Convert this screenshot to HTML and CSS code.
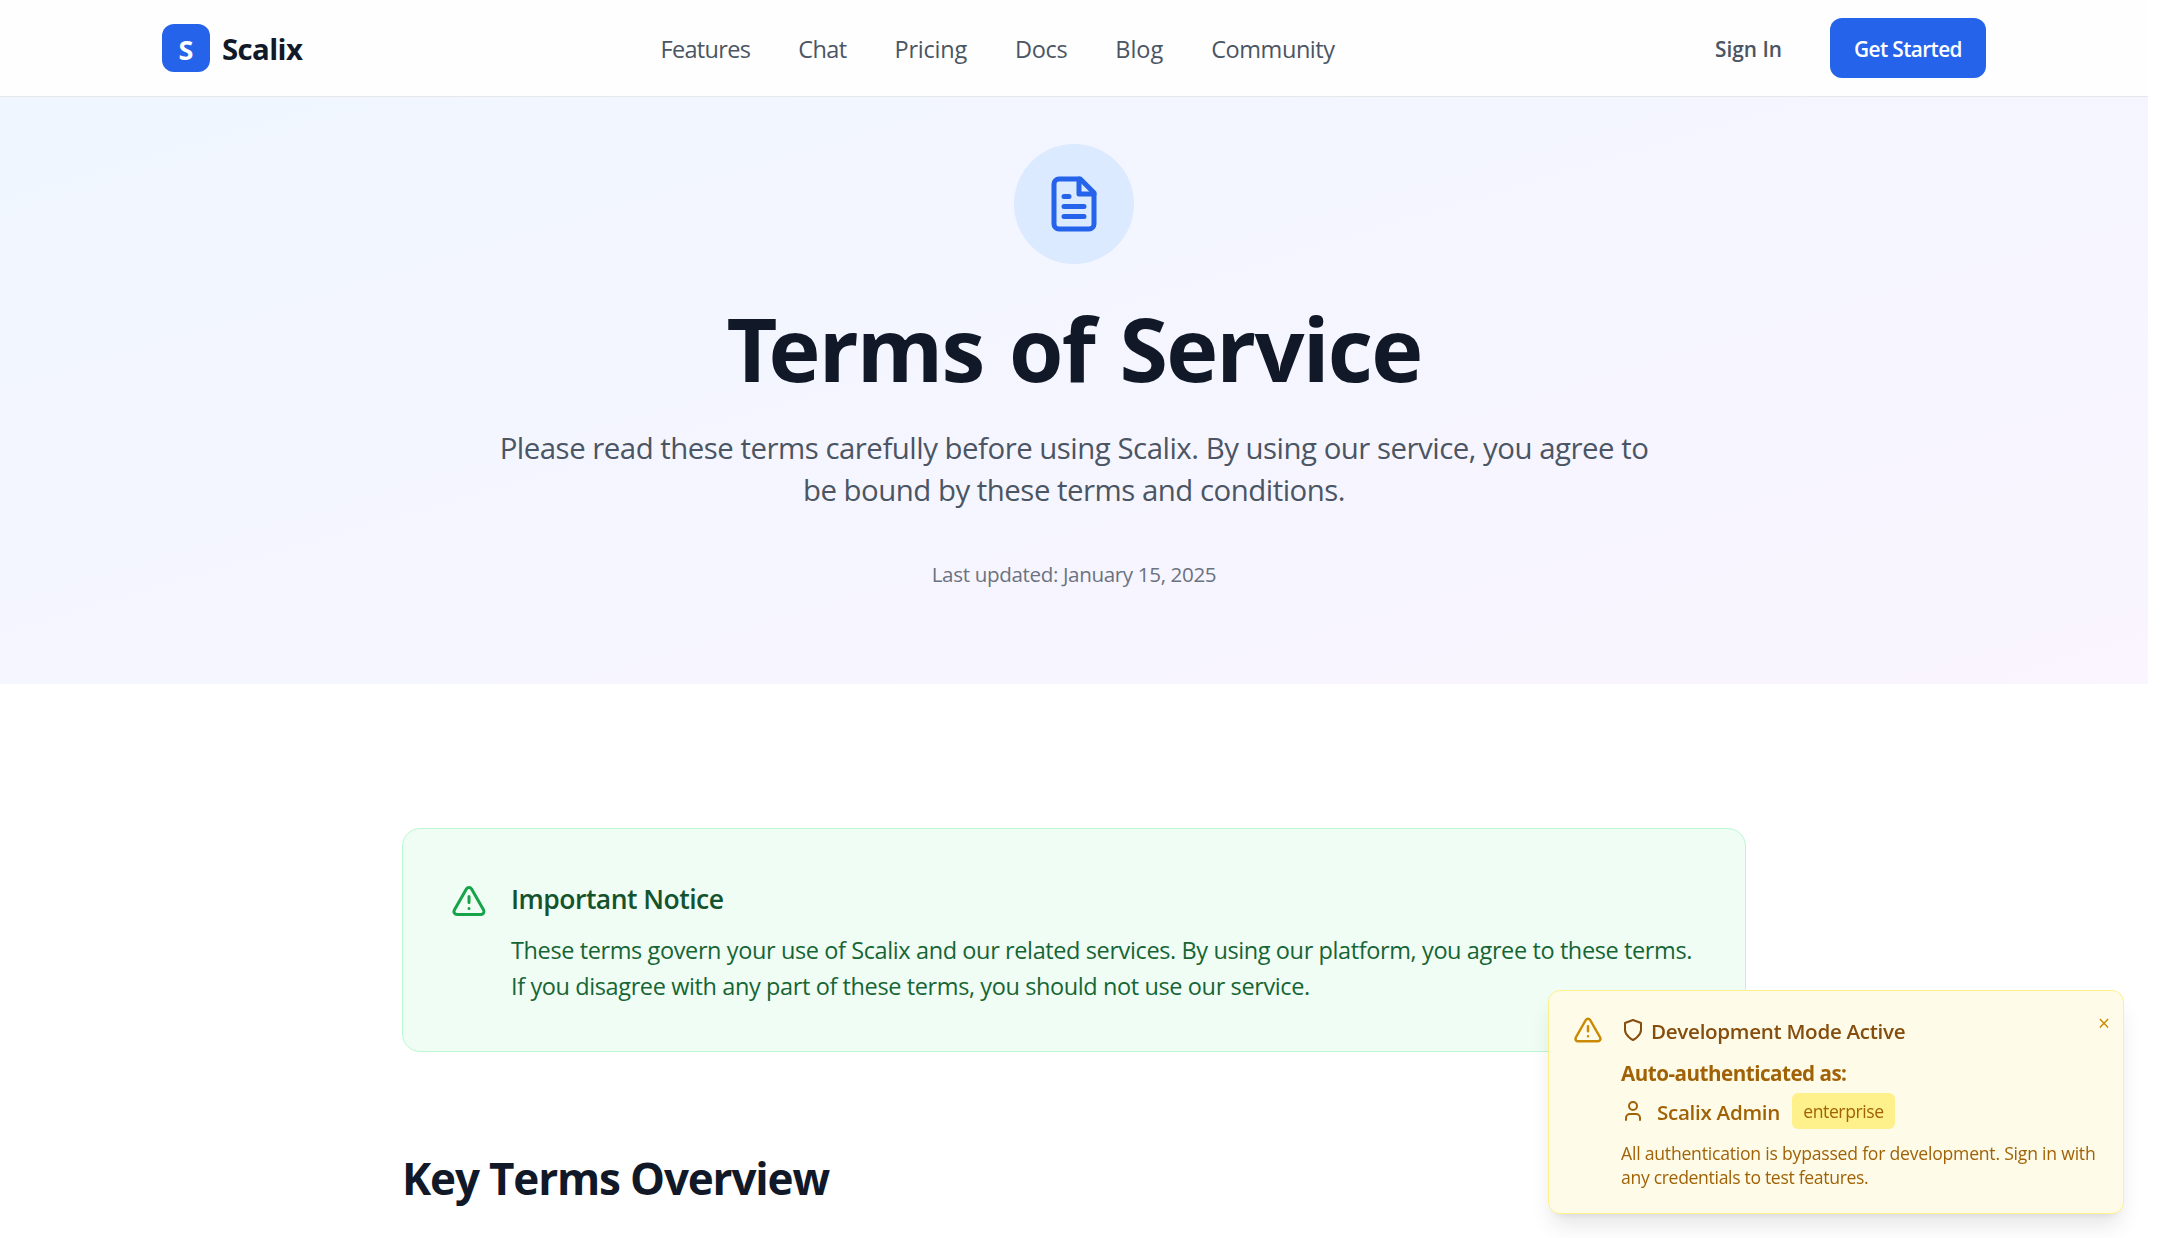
FILE: index.html
```html
<!DOCTYPE html>
<html lang="en">
<head>
<meta charset="utf-8">
<title>Terms of Service - Scalix</title>
<link rel="stylesheet" href="styles.css">
</head>
<body>
<div class="page">
  <header class="header">
    <div class="header-inner">
      <a class="brand"><span class="brand-mark">S</span><span class="brand-name">Scalix</span></a>
      <nav class="nav"><a class="nav-features">Features</a><a class="nav-chat">Chat</a><a class="nav-pricing">Pricing</a><a class="nav-docs">Docs</a><a class="nav-blog">Blog</a><a class="nav-community">Community</a></nav>
      <div class="actions"><a class="sign-in">Sign In</a><a class="button">Get Started</a></div>
    </div>
  </header>
  <section class="hero">
    <div class="hero-icon">
      <svg viewBox="0 0 24 24" width="60" height="60" class="icon"><path d="M14.500 2H6a2 2 0 0 0-2 2v16a2 2 0 0 0 2 2h12a2 2 0 0 0 2-2V7.500L14.500 2z"/><path d="M14 2v6h6"/><path d="M10 9H8M16 13H8M16 17H8"/></svg>
    </div>
    <h1 class="title"><span class="title-kern">T</span>erms of Service</h1>
    <p class="lead">Please read these terms carefully before using Scalix. By using our service, you agree to<br>be bound by these terms and conditions.</p>
    <p class="updated">Last updated: January 15, 2025</p>
  </section>
  <main class="content">
    <section class="notice">
      <svg viewBox="0 0 24 24" width="36" height="36" class="icon notice-icon"><path d="m21.73 18-8-14a2 2 0 0 0-3.48 0l-8 14A2 2 0 0 0 4 21h16a2 2 0 0 0 1.73-3Z"/><path d="M12 9v4M12 17h.01"/></svg>
      <div class="notice-body">
        <h2 class="notice-title">Important Notice</h2>
        <p class="notice-text">These terms govern your use of Scalix and our related services. By using our platform, you agree to these terms.<br>If you disagree with any part of these terms, you should not use our service.</p>
      </div>
    </section>
    <h2 class="section-title">Key Terms Overview</h2>
  </main>
</div>
<aside class="toast">
  <svg viewBox="0 0 24 24" width="30" height="30" class="icon toast-icon"><path d="m21.73 18-8-14a2 2 0 0 0-3.48 0l-8 14A2 2 0 0 0 4 21h16a2 2 0 0 0 1.73-3Z"/><path d="M12 9v4M12 17h.01"/></svg>
  <div class="toast-body">
    <div class="toast-title"><svg viewBox="0 0 24 24" width="24" height="24" class="icon"><path d="M12 22s8-4 8-10V5l-8-3-8 3v7c0 6 8 10 8 10"/></svg><span>Development Mode Active</span></div>
    <div class="toast-label">Auto-authenticated as:</div>
    <div class="toast-user"><svg viewBox="0 0 24 24" width="24" height="24" class="icon"><path d="M19 21v-2a4 4 0 0 0-4-4H9a4 4 0 0 0-4 4v2"/><circle cx="12" cy="7" r="4"/></svg><span class="user-name">Scalix Admin</span><span class="badge">enterprise</span></div>
    <p class="toast-text">All authentication is bypassed for development. Sign in with<br><span class="toast-text-end">any credentials to test features.</span></p>
  </div>
  <span class="close">×</span>
</aside>
</body>
</html>
```
FILE: styles.css
```css
* { box-sizing: border-box; }
body { margin: 0; background: #fff; color: #111827; font-family: "Open Sans", sans-serif; overflow: hidden; height: 1238px; }
h1, h2, p { margin: 0; }
.page { width: 2148px; }
.icon { display: block; flex: none; fill: none; stroke: currentColor; stroke-width: 2; stroke-linecap: round; stroke-linejoin: round; }

.header { position: relative; z-index: 1; height: 97px; background: #fefefe; border-bottom: 1px solid #e5e7eb; }
.header-inner { width: 1824px; height: 96px; margin: 0 auto; display: grid; grid-template-columns: 498.5px 1fr auto; align-items: center; }
.brand { display: flex; align-items: center; gap: 12px; }
.brand-mark { width: 48px; height: 48px; border-radius: 12px; background: #2563eb; color: #fff; font-size: 27px; font-weight: 700; line-height: 51px; text-align: center; }
.brand-name { padding-top: 2px; font-size: 29.4px; font-weight: 700; line-height: 42px; letter-spacing: -.6px; }
.nav { display: flex; gap: 48px; padding-top: 2px; font-size: 23.5px; line-height: 36px; color: #4b5563; }
.nav-features { letter-spacing: -.67px; }
.nav-chat { letter-spacing: -.6px; }
.nav-pricing { letter-spacing: -.23px; }
.nav-docs { letter-spacing: -.35px; }
.nav-community { letter-spacing: -.45px; }
.actions { display: flex; align-items: center; gap: 48px; font-size: 20.8px; font-weight: 600; }
.sign-in { padding-top: 2px; color: #4b5563; }
.button { width: 156px; height: 60px; border-radius: 12px; background: #2563eb; color: #fff; line-height: 63px; text-align: center; letter-spacing: -.6px; }

.hero { margin-top: -49px; height: 636px; padding-top: 96px; background: linear-gradient(to bottom right, #eff6ff, #faf5ff); text-align: center; }
.hero-icon { width: 120px; height: 120px; margin: 0 auto 34px; border-radius: 50%; background: #dbeafe; color: #2563eb; display: flex; align-items: center; justify-content: center; }
.title { font-size: 88px; font-weight: 700; line-height: 100px; letter-spacing: -1.8px; word-spacing: 4.5px; white-space: nowrap; }
.title-kern { letter-spacing: -9px; }
.lead { margin-top: 29px; font-size: 29.4px; line-height: 42px; letter-spacing: -.49px; color: #4b5563; white-space: nowrap; }
.updated { margin-top: 48px; font-size: 20.6px; line-height: 30px; letter-spacing: -.36px; color: #6b7280; }

.content { width: 1344px; margin: 0 auto; padding-top: 144px; }
.notice { height: 224px; padding: 48px; display: flex; gap: 24px; background: #f0fdf4; border: 1px solid #bbf7d0; border-radius: 18px; }
.notice-icon { margin-top: 6px; color: #16a34a; }
.notice-title { padding-top: 1px; font-size: 26.5px; font-weight: 600; line-height: 42px; letter-spacing: -.52px; color: #14532d; }
.notice-text { margin-top: 12px; font-size: 23.5px; line-height: 36px; letter-spacing: -.39px; color: #166534; white-space: nowrap; }
.section-title { margin-top: 96px; font-size: 44px; font-weight: 700; line-height: 60px; letter-spacing: -1.16px; }

.toast { position: fixed; z-index: 2; left: 1548px; top: 990px; width: 576px; height: 224px; padding: 24px; display: flex; gap: 18px; background: #fefce8; border: 1px solid #fef08a; border-radius: 12px; box-shadow: 0 15px 22px -4px rgba(0,0,0,.1), 0 6px 9px -6px rgba(0,0,0,.1); color: #a16207; }
.toast-icon { color: #ca8a04; }
.toast-title { display: flex; align-items: center; gap: 6px; font-size: 20.6px; font-weight: 600; line-height: 30px; letter-spacing: -.3px; color: #854d0e; }
.toast-title span { padding-top: 1px; margin-bottom: -1px; }
.toast-label { margin-top: 13px; font-size: 20.6px; font-weight: 700; line-height: 30px; letter-spacing: -.5px; }
.toast-user { margin-top: 5px; height: 36px; display: flex; align-items: center; font-size: 20.6px; font-weight: 600; letter-spacing: -.3px; }
.user-name { margin: 2px 12px 0; }
.badge { width: 103px; height: 36px; border-radius: 6px; background: #fef08a; font-size: 17.6px; font-weight: 400; line-height: 36px; letter-spacing: -.42px; text-align: center; }
.toast-text { margin-top: 12px; font-size: 17.6px; line-height: 24px; letter-spacing: -.22px; white-space: nowrap; }
.toast-text-end { letter-spacing: -.33px; }
.close { position: absolute; right: 13px; top: 17px; font-size: 21px; line-height: 30px; color: #ca8a04; }
```
